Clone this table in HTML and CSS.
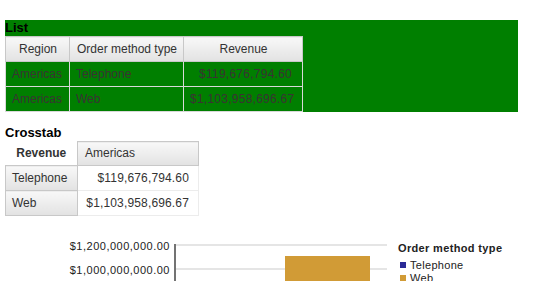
FILE: index.html
```html
<!DOCTYPE html>
<html>
<head>
<meta charset="utf-8">
<link rel="stylesheet" href="styles.css">
</head>
<body>
<div class="page">
  <section class="list-block">
    <div class="title">List</div>
    <table class="list">
      <colgroup><col class="c1"><col class="c2"><col class="c3"></colgroup>
      <tr class="hdr"><td class="center">Region</td><td class="center">Order method type</td><td class="center">Revenue</td></tr>
      <tr class="row"><td>Americas</td><td>Telephone</td><td class="num">$119,676,794.60</td></tr>
      <tr class="row"><td>Americas</td><td>Web</td><td class="num">$1,103,958,696.67</td></tr>
    </table>
  </section>

  <section class="crosstab-block">
    <div class="title">Crosstab</div>
    <table class="xtab">
      <colgroup><col class="x1"><col class="x2"></colgroup>
      <tr><td class="corner">Revenue</td><td class="colhdr">Americas</td></tr>
      <tr><td class="rowhdr">Telephone</td><td class="cell">$119,676,794.60</td></tr>
      <tr><td class="rowhdr">Web</td><td class="cell">$1,103,958,696.67</td></tr>
    </table>
  </section>

  <svg class="chart" width="529" height="60" viewBox="5 225 529 60" xmlns="http://www.w3.org/2000/svg">
    <line x1="176" y1="244" x2="387" y2="244" stroke="#dcdcdc" stroke-width="1.5"/>
    <line x1="176" y1="268" x2="387" y2="268" stroke="#dcdcdc" stroke-width="1.5"/>
    <rect x="285" y="255" width="85" height="30" fill="#d19b36"/>
    <line x1="175" y1="243" x2="175" y2="285" stroke="#444" stroke-width="1.5"/>
    <text class="axis" x="170" y="249" text-anchor="end">$1,200,000,000.00</text>
    <text class="axis" x="170" y="273" text-anchor="end">$1,000,000,000.00</text>
    <text class="legend-title" x="398" y="251">Order method type</text>
    <rect x="400" y="261" width="6" height="6" fill="#2b2b96"/>
    <text class="legend" x="410" y="268">Telephone</text>
    <rect x="400" y="274" width="6" height="7" fill="#d19b36"/>
    <text class="legend" x="410" y="281">Web</text>
  </svg>
</div>
</body>
</html>
```
FILE: styles.css
```css
html, body {
  margin: 0;
  padding: 0;
  background: #ffffff;
}
body {
  font-family: "Liberation Sans", Arial, sans-serif;
  font-size: 12px;
  color: #333;
  overflow: hidden;
}
.page {
  padding: 20px 0 0 5px;
}
.title {
  font-weight: bold;
  font-size: 13px;
  line-height: 16px;
  color: #000;
}
.list-block {
  background: #007f00;
  width: 513px;
}
table {
  border-collapse: collapse;
  table-layout: fixed;
}
.list {
  width: 297px;
}
.list col.c1 { width: 64px; }
.list col.c2 { width: 114px; }
.list col.c3 { width: 119px; }
.list td {
  padding: 0 5px 0 6px;
  line-height: 24px;
  white-space: nowrap;
  overflow: hidden;
}
.list .hdr td {
  background: linear-gradient(#f8f8f8, #e2e2e2);
  border: 1px solid #c8c8c8;
  color: #333;
}
.list .row td {
  border: 1px solid #d9d9d9;
  color: #3a3333;
}
.center { text-align: center; }
.list td.num {
  text-align: right;
  padding-right: 10px;
  letter-spacing: 0.25px;
}
.crosstab-block {
  margin-top: 13px;
}
.xtab {
  width: 193px;
}
.xtab col.x1 { width: 72px; }
.xtab col.x2 { width: 121px; }
.xtab td {
  line-height: 24px;
  padding: 0;
  white-space: nowrap;
}
.xtab .corner {
  text-align: center;
  font-weight: bold;
  color: #333;
  border: none;
  line-height: 23px;
}
.xtab .colhdr {
  background: linear-gradient(#f8f8f8, #e2e2e2);
  border: 1px solid #c8c8c8;
  padding-left: 7px;
  line-height: 23px;
}
.xtab .rowhdr {
  background: linear-gradient(#f8f8f8, #e2e2e2);
  border: 1px solid #c8c8c8;
  padding-left: 6px;
}
.xtab .cell {
  background: #fff;
  border: 1px solid #ececec;
  text-align: right;
  padding-right: 9px;
  letter-spacing: 0.15px;
}
.chart {
  display: block;
  margin-top: 10px;
}
.chart .axis {
  font-family: "Liberation Sans", Arial, sans-serif;
  font-size: 11px;
  letter-spacing: 0.5px;
  fill: #222;
}
.chart .legend-title {
  font-family: "Liberation Sans", Arial, sans-serif;
  font-size: 11px;
  font-weight: bold;
  letter-spacing: 0.35px;
  fill: #222;
}
.chart .legend {
  font-family: "Liberation Sans", Arial, sans-serif;
  font-size: 11px;
  letter-spacing: 0.3px;
  fill: #222;
}
```
